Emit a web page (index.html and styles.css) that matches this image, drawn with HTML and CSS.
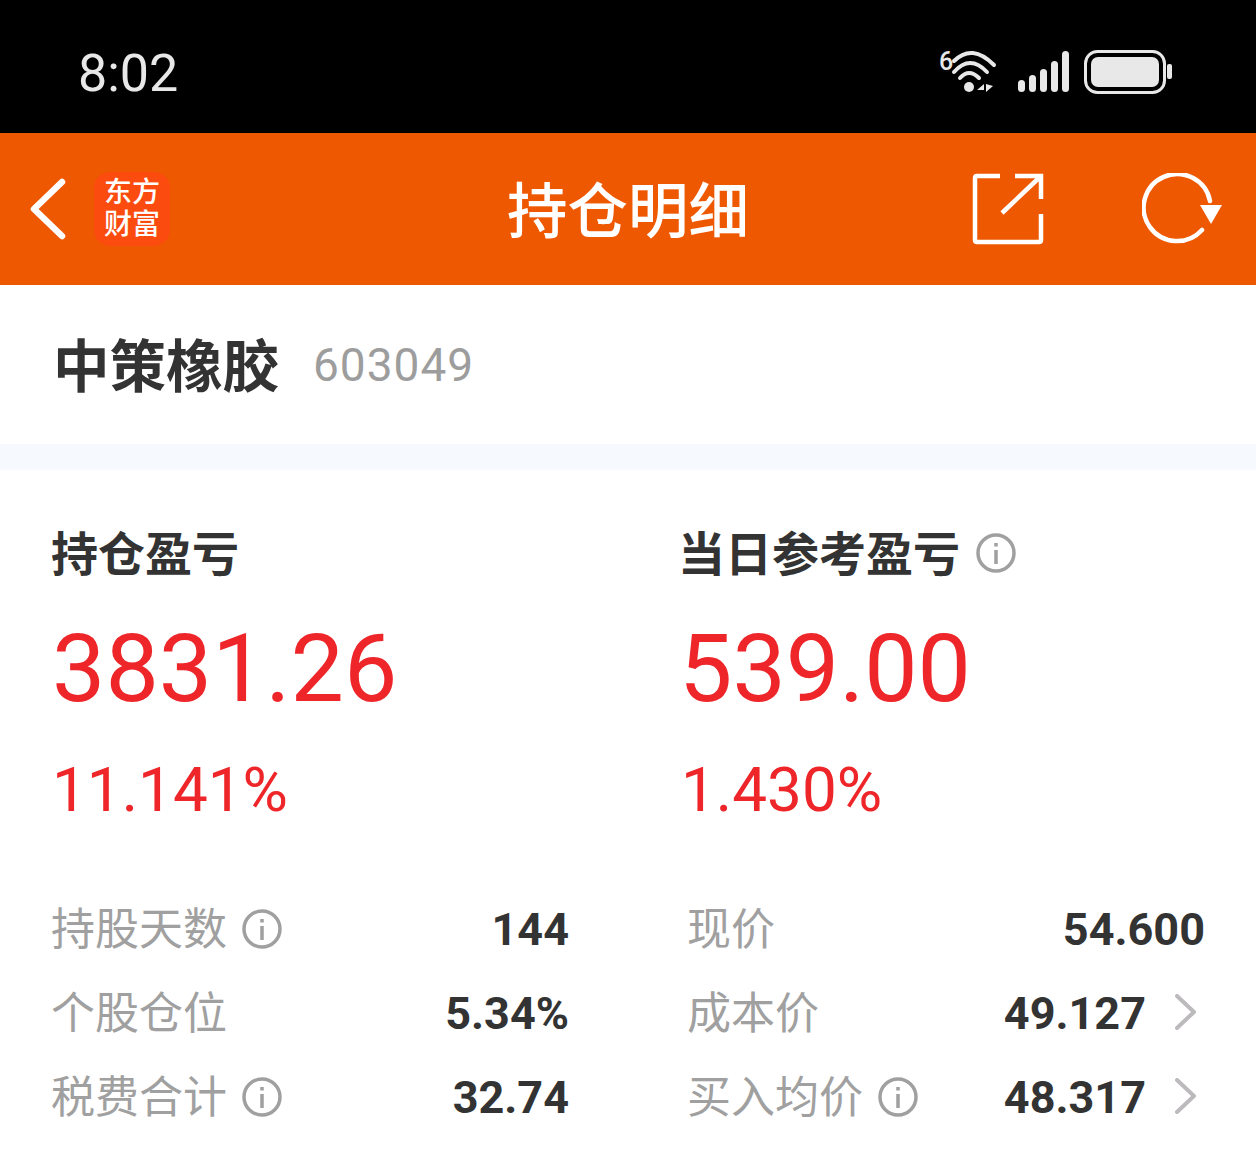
FILE: index.html
```html
<!DOCTYPE html>
<html lang="zh">
<head>
<meta charset="utf-8">
<title>持仓明细</title>
<link rel="stylesheet" href="styles.css">
</head>
<body>
<div class="statusbar">
  <span class="time">8:02</span>
  <div class="status-icons">
    <svg class="wifi" width="60" height="48" viewBox="0 0 60 48">
      <text x="1" y="22" class="six">6</text>
      <path d="M16 13 Q34 -5 56 17" fill="none" stroke="#e8e8e8" stroke-width="4" stroke-linecap="round"/>
      <path d="M16 24 Q32 6 49 24" fill="none" stroke="#e8e8e8" stroke-width="4" stroke-linecap="round"/>
      <path d="M22 30 Q31 20 41 30" fill="none" stroke="#e8e8e8" stroke-width="4" stroke-linecap="round"/>
      <circle cx="31" cy="39" r="5" fill="#e8e8e8"/>
      <path d="M46 36 L39 42 H46 Z M48 36 V44 L55 38 Z" fill="#e8e8e8"/>
    </svg>
    <svg class="signal" width="52" height="42" viewBox="0 0 52 42">
      <g fill="#e8e8e8">
        <rect x="0" y="29" width="7" height="12" rx="3.5"/>
        <rect x="11" y="24" width="7" height="17" rx="3.5"/>
        <rect x="22" y="18" width="7" height="23" rx="3.5"/>
        <rect x="33" y="10" width="7" height="31" rx="3.5"/>
        <rect x="44" y="0" width="7" height="41" rx="3.5"/>
      </g>
    </svg>
    <svg class="battery" width="88" height="44" viewBox="0 0 88 44">
      <rect x="1.5" y="1.5" width="79" height="41" rx="12" fill="none" stroke="#e8e8e8" stroke-width="3"/>
      <rect x="7" y="7" width="68" height="30" rx="7" fill="#e8e8e8"/>
      <rect x="83" y="14" width="5" height="15" rx="2" fill="#e8e8e8"/>
    </svg>
  </div>
</div>

<header class="topbar">
  <div class="top-left">
    <svg class="back" width="38" height="62" viewBox="0 0 38 62">
      <path d="M33 4 L5 31 L33 58" fill="none" stroke="#fff" stroke-width="6.500" stroke-linecap="round" stroke-linejoin="round"/>
    </svg>
    <div class="logo"><span class="logo-line">东方</span><span class="logo-line">财富</span></div>
  </div>
  <h1 class="title">持仓明细</h1>
  <div class="top-right">
    <svg class="share" width="72" height="72" viewBox="0 0 72 72">
      <path d="M28 3 H5 Q3 3 3 5 V67 Q3 69 5 69 H67 Q69 69 69 67 V41 M43 3 H69 V26 M69 3 L30 40" fill="none" stroke="#fff" stroke-width="4.500"/>
    </svg>
    <svg class="refresh" width="80" height="72" viewBox="0 0 80 72">
      <path d="M60 57 A33.500 33.500 0 1 1 68 28" fill="none" stroke="#fff" stroke-width="4.500" stroke-linecap="round"/>
      <path d="M58 32 H80 L69 51 Z" fill="#fff"/>
    </svg>
  </div>
</header>

<section class="stock">
  <span class="stock-name">中策橡胶</span>
  <span class="stock-code">603049</span>
</section>
<div class="strip"></div>

<section class="pnl">
  <div class="pnl-col">
    <div class="pnl-label">持仓盈亏</div>
    <div class="pnl-value">3831.26</div>
    <div class="pnl-pct">11.141%</div>
  </div>
  <div class="pnl-col">
    <div class="pnl-label">当日参考盈亏
      <svg class="info info-label" viewBox="0 0 40 40"><use href="#i"/></svg>
    </div>
    <div class="pnl-value">539.00</div>
    <div class="pnl-pct">1.430%</div>
  </div>
</section>

<section class="details">
  <div class="row">
    <span class="key">持股天数<svg class="info" viewBox="0 0 40 40"><use href="#i"/></svg></span>
    <span class="val">144</span>
  </div>
  <div class="row">
    <span class="key">现价</span>
    <span class="val">54.600</span>
  </div>
  <div class="row">
    <span class="key">个股仓位</span>
    <span class="val">5.34%</span>
  </div>
  <div class="row has-arrow">
    <span class="key">成本价</span>
    <span class="val">49.127</span>
    <svg class="chev" width="22" height="36" viewBox="0 0 22 36"><path d="M2 2 L19 18 L2 34" fill="none" stroke="#bdbabd" stroke-width="4" stroke-linecap="round" stroke-linejoin="round"/></svg>
  </div>
  <div class="row">
    <span class="key">税费合计<svg class="info" viewBox="0 0 40 40"><use href="#i"/></svg></span>
    <span class="val">32.74</span>
  </div>
  <div class="row has-arrow">
    <span class="key">买入均价<svg class="info" viewBox="0 0 40 40"><use href="#i"/></svg></span>
    <span class="val">48.317</span>
    <svg class="chev" width="22" height="36" viewBox="0 0 22 36"><path d="M2 2 L19 18 L2 34" fill="none" stroke="#bdbabd" stroke-width="4" stroke-linecap="round" stroke-linejoin="round"/></svg>
  </div>
</section>

<svg class="defs" width="0" height="0">
  <symbol id="i" viewBox="0 0 40 40">
    <circle cx="20" cy="20" r="18" fill="none" stroke="#a0a0a0" stroke-width="3.500"/>
    <rect x="18.250" y="17" width="3.500" height="14" fill="#a0a0a0"/>
    <rect x="18.250" y="10" width="3.500" height="3.500" fill="#a0a0a0"/>
  </symbol>
</svg>
</body>
</html>
```
FILE: styles.css
```css
* { box-sizing: border-box; margin: 0; padding: 0; }
html, body { background: #fff; }
body {
  width: 1256px;
  height: 1149px;
  overflow: hidden;
  font-family: Roboto, "Noto Sans CJK SC", sans-serif;
}
.statusbar {
  height: 133px;
  background: #000;
  display: flex;
  align-items: center;
  justify-content: space-between;
  padding: 14px 84px 0 78px;
}
.time { font-size: 52px; color: #e8e8e8; font-weight: 400; }
.status-icons { display: flex; align-items: center; gap: 21px; margin-top: -4px; }
.wifi { overflow: visible; }
.six { font: 500 25px Roboto, sans-serif; fill: #e8e8e8; }
.signal { margin-left: -1px; }
.battery { margin-left: -7px; }

.topbar {
  height: 152px;
  background: #ee5800;
  position: relative;
  display: flex;
  align-items: center;
  justify-content: space-between;
  padding: 0 34px 0 29px;
}
.top-left { display: flex; align-items: center; gap: 27px; }
.logo {
  width: 76px;
  height: 74px;
  background: #fb4b0e;
  border-radius: 16px;
  display: flex;
  flex-direction: column;
  align-items: center;
  justify-content: center;
  padding-bottom: 1px;
  color: #fff;
  font-family: "Liberation Sans", "Noto Sans CJK SC", sans-serif;
  font-weight: 500;
  font-size: 28px;
}
.logo-line { display: block; height: 32px; line-height: 32px; }
.title {
  position: absolute;
  left: 0;
  right: 0;
  top: -2px;
  height: 152px;
  line-height: 152px;
  text-align: center;
  color: #fff;
  font-family: "Noto Sans CJK SC", sans-serif;
  font-size: 60.500px;
  font-weight: 500;
}
.top-right { display: flex; align-items: center; gap: 98px; }

.stock {
  height: 159px;
  display: flex;
  align-items: center;
  padding: 0 0 5px 53px;
  gap: 34px;
}
.stock-name {
  font-family: "Noto Sans CJK SC", sans-serif;
  font-size: 56.500px;
  font-weight: 700;
  color: #333;
}
.stock-code { font-size: 46px; color: #9d9d9d; letter-spacing: 1px; padding-top: 5px; }
.strip { height: 26px; background: #f6fafe; }

.pnl {
  display: grid;
  grid-template-columns: 627px 1fr;
  padding: 53px 0 0 52px;
  height: 398px;
}
.pnl-label {
  font-family: "Noto Sans CJK SC", sans-serif;
  font-size: 47px;
  font-weight: 700;
  color: #333;
  line-height: 56px;
  margin-left: -1px;
  display: flex;
  align-items: center;
}
.pnl-value {
  font-size: 95px;
  color: #ee2529;
  line-height: 110px;
  margin-top: 35px;
}
.pnl-pct {
  font-size: 62px;
  color: #ee2529;
  line-height: 72px;
  margin-top: 30px;
}
.pnl-col:last-child .pnl-pct { margin-left: 2px; }
.info { width: 40px; height: 40px; margin-left: 15px; flex: none; position: relative; top: 3px; }
.pnl-label .info { margin-left: 16px; top: 2px; }
.defs { position: absolute; }

.details {
  display: grid;
  grid-template-columns: 517px 517px;
  column-gap: 119px;
  grid-auto-rows: 84px;
  padding-left: 52px;
  margin-top: 19px;
}
.row { display: flex; align-items: center; position: relative; }
.key {
  display: flex;
  align-items: center;
  font-family: "Noto Sans CJK SC", sans-serif;
  font-size: 44px;
  color: #a0a0a0;
  margin: -6px 0 0 -1px;
}
.val {
  margin-left: auto;
  font-size: 45px;
  font-weight: 700;
  color: #333;
}
.has-arrow { padding-right: 59px; }
.chev { position: absolute; right: 8px; top: 23px; }
```
